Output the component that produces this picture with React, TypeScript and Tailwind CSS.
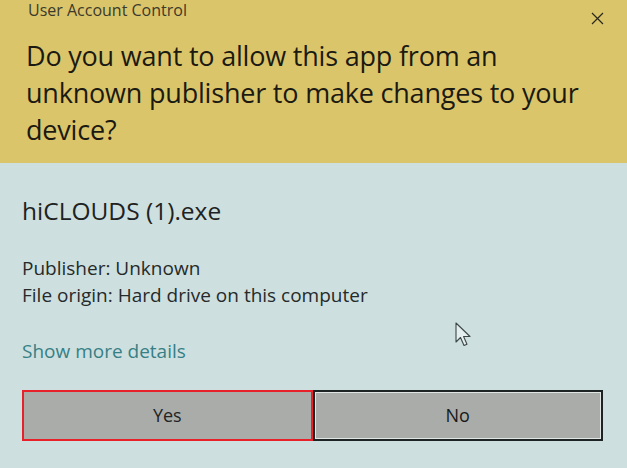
import React from 'react';

const font = { fontFamily: '"Open Sans", "Noto Sans", Arial, sans-serif' };

const Cursor = () => (
  <svg width="20" height="26" viewBox="0 0 20 26" className="absolute left-[455px] top-[322px]">
    <path
      d="M1 1 L1 20 L5.5 15.5 L9 23.5 L12 22.2 L8.6 14.5 L15 14.5 Z"
      fill="#e4eeee"
      stroke="#3c4646"
      strokeWidth="1.1"
      strokeLinejoin="round"
    />
  </svg>
);

export default function App() {
  return (
    <div className="relative w-[627px] h-[468px] overflow-hidden bg-[#cde0df]" style={font}>
      {/* Header */}
      <div className="h-[163px] bg-[#dbc56b] px-[26px] relative">
        <div className="text-[16px] leading-[20px] text-[#3c3a2c] pl-[2px]">User Account Control</div>
        <button className="absolute right-[22px] top-[10px] w-[16px] h-[16px] flex items-center justify-center">
          <svg width="13" height="13" viewBox="0 0 13 13">
            <path d="M1 1 L12 12 M12 1 L1 12" stroke="#2a2818" strokeWidth="1.2" />
          </svg>
        </button>
        <h1 className="mt-[17px] text-[27px] leading-[37px] text-[#1b1a12] font-normal tracking-[-0.2px] w-[570px]">
          Do you want to allow this app from an unknown publisher to make changes to your device?
        </h1>
      </div>

      {/* Body */}
      <div className="px-[22px] pt-[32px]">
        <div className="text-[24.5px] leading-[32px] text-[#1e2222]">hiCLOUDS (1).exe</div>
        <div className="mt-[28px] text-[19px] leading-[27px] text-[#262a2a]">
          <div>Publisher: Unknown</div>
          <div>File origin: Hard drive on this computer</div>
        </div>
        <div className="mt-[29px] text-[19px] leading-[27px] text-[#377f86]">Show more details</div>
        <div className="mt-[25px] flex w-[581px]">
          <button className="flex-1 h-[51px] bg-[#a9aca8] border-2 border-[#e8202a] text-[18px] text-[#222424]">
            Yes
          </button>
          <button className="flex-1 h-[51px] bg-[#a9aca8] border-2 border-[#1e2424] text-[18px] text-[#161a1a] shadow-[inset_0_0_0_1px_#dfe6e4]">
            No
          </button>
        </div>
      </div>

      <Cursor />
    </div>
  );
}
